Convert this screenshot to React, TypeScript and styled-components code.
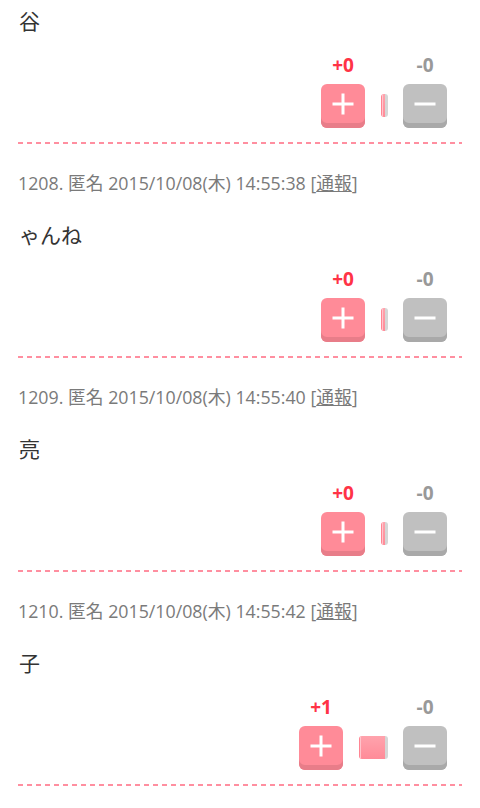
import * as React from 'react';
import styled, { createGlobalStyle } from 'styled-components';

const GlobalStyle = createGlobalStyle`
  html, body {
    margin: 0;
    padding: 0;
    background: #fff;
  }
  body {
    font-family: "Open Sans", "Noto Sans", "Noto Sans CJK JP", sans-serif;
    color: #333;
  }
`;

const Page = styled.div`
  padding: 0 18px;
`;

const Post = styled.div`
  display: flex;
  flex-direction: column;
`;

const Meta = styled.div`
  margin-top: 28px;
  font-size: 17.8px;
  line-height: 22px;
  color: #7a7a7a;
  white-space: nowrap;
  font-family: "Open Sans", "Noto Sans CJK JP", sans-serif;
`;

const Report = styled.a`
  color: #7a7a7a;
  text-decoration: underline;
`;

const Body = styled.div<{ $first?: boolean }>`
  margin-top: ${(p) => (p.$first ? '5px' : '25px')};
  padding-left: 1px;
  font-size: 21px;
  line-height: 30px;
  color: #333;
  font-family: "Noto Sans CJK JP", sans-serif;
`;

const VoteArea = styled.div`
  margin-top: 20px;
  display: flex;
  justify-content: flex-end;
  align-items: flex-end;
  padding-right: 15px;
`;

const VoteCol = styled.div`
  display: flex;
  flex-direction: column;
  align-items: center;
  width: 44px;
`;

const Count = styled.div<{ $up?: boolean }>`
  font-size: 19px;
  font-weight: 700;
  line-height: 20px;
  color: ${(p) => (p.$up ? '#ff3346' : '#999')};
  margin-bottom: 9px;
  font-family: "Open Sans", sans-serif;
`;

const VoteButton = styled.button<{ $up?: boolean }>`
  width: 44px;
  height: 44px;
  border: none;
  padding: 0 0 5px;
  border-radius: 6px;
  background: ${(p) => (p.$up ? '#ff8b98' : '#c0c0c0')};
  box-shadow: inset 0 -5px 0 ${(p) => (p.$up ? '#e87d89' : '#a9a9a9')};
  display: flex;
  align-items: center;
  justify-content: center;
  cursor: pointer;
`;

const BarWrap = styled.div`
  align-self: flex-end;
  height: 44px;
  display: flex;
  align-items: center;
  margin: 0 15px 0 16px;
  padding-bottom: 2px;
  box-sizing: border-box;
`;

const Bar = styled.div`
  display: flex;
  height: 23px;
  border-radius: 3px;
  overflow: hidden;
`;

const BarUp = styled.div`
  background: linear-gradient(#ffa3ad, #ff8b98);
  border-left: 1px solid #ff8593;
  box-shadow: inset 1px 0 0 #ffc5cc;
`;

const BarDown = styled.div`
  background: #d6d6d6;
`;

const Divider = styled.div`
  margin-top: 14px;
  height: 2px;
  background-image: linear-gradient(90deg, #ff8fa0 5px, transparent 5px);
  background-size: 9px 2px;
  background-repeat: repeat-x;
`;

const Sign: React.FC<{ plus?: boolean }> = ({ plus }) => (
  <svg width="22" height="22" viewBox="0 0 22 22">
    <rect x="0.5" y="9.5" width="21" height="3" fill="#fff" />
    {plus && <rect x="9.5" y="0.5" width="3" height="21" fill="#fff" />}
  </svg>
);

interface PostData {
  no?: number;
  time?: string;
  text: string;
  up: number;
  down: number;
}

const posts: PostData[] = [
  { text: '谷', up: 0, down: 0 },
  { no: 1208, time: '2015/10/08(木) 14:55:38', text: 'ゃんね', up: 0, down: 0 },
  { no: 1209, time: '2015/10/08(木) 14:55:40', text: '亮', up: 0, down: 0 },
  { no: 1210, time: '2015/10/08(木) 14:55:42', text: '子', up: 1, down: 0 },
];

const RatioBar: React.FC<{ up: number; down: number }> = ({ up, down }) => {
  const total = up + down;
  const upWidth = total === 0 ? 3 : 1 + Math.round((24 * up) / total);
  const downWidth = total === 0 ? 3 : 3 + Math.round((24 * down) / total);
  return (
    <BarWrap>
      <Bar>
        <BarUp style={{ width: upWidth }} />
        <BarDown style={{ width: downWidth }} />
      </Bar>
    </BarWrap>
  );
};

export default function App() {
  return (
    <Page>
      <GlobalStyle />
      {posts.map((post, i) => (
        <Post key={i}>
          {post.no && (
            <Meta>
              {post.no}. 匿名 {post.time} [<Report>通報</Report>]
            </Meta>
          )}
          <Body $first={i === 0}>{post.text}</Body>
          <VoteArea>
            <VoteCol>
              <Count $up>+{post.up}</Count>
              <VoteButton $up>
                <Sign plus />
              </VoteButton>
            </VoteCol>
            <RatioBar up={post.up} down={post.down} />
            <VoteCol>
              <Count>-{post.down}</Count>
              <VoteButton>
                <Sign />
              </VoteButton>
            </VoteCol>
          </VoteArea>
          <Divider />
        </Post>
      ))}
    </Page>
  );
}
